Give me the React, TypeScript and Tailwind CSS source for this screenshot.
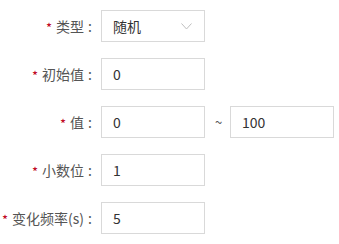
import React from "react";

const font = { fontFamily: '"Noto Sans CJK SC", "Noto Sans", sans-serif' };

function Label({ text }: { text: string }) {
  return (
    <div className="flex w-[92px] shrink-0 items-center justify-end text-[14px] text-[#555]">
      <span className="mr-[4px] translate-y-[2px] text-[13px] text-[#c00020]">*</span>
      <span>{text}</span>
      <span className="ml-[4px]">:</span>
    </div>
  );
}

function Box({ value, children }: { value: string; children?: React.ReactNode }) {
  return (
    <div className="flex h-[32px] w-[104px] shrink-0 items-center justify-between border border-[#d9d9d9] bg-white pl-[11px] pr-[12px] text-[14px] text-[#333]">
      <span>{value}</span>
      {children}
    </div>
  );
}

export default function App() {
  return (
    <div className="flex h-[244px] w-[339px] flex-col gap-[16px] bg-white pt-[10px]" style={font}>
      <div className="flex items-center gap-[9px]">
        <Label text="类型" />
        <Box value="随机">
          <svg width="11" height="7" viewBox="0 0 11 7" fill="none">
            <path d="M0.5 0.5 L5.5 6 L10.5 0.5" stroke="#bfbfbf" strokeWidth="1" />
          </svg>
        </Box>
      </div>
      <div className="flex items-center gap-[9px]">
        <Label text="初始值" />
        <Box value="0" />
      </div>
      <div className="flex items-center">
        <Label text="值" />
        <div className="ml-[9px]">
          <Box value="0" />
        </div>
        <span className="ml-[10px] w-[15px] text-[13px] text-[#555]">~</span>
        <Box value="100" />
      </div>
      <div className="flex items-center gap-[9px]">
        <Label text="小数位" />
        <Box value="1" />
      </div>
      <div className="flex items-center gap-[9px]">
        <Label text="变化频率(s)" />
        <Box value="5" />
      </div>
    </div>
  );
}
